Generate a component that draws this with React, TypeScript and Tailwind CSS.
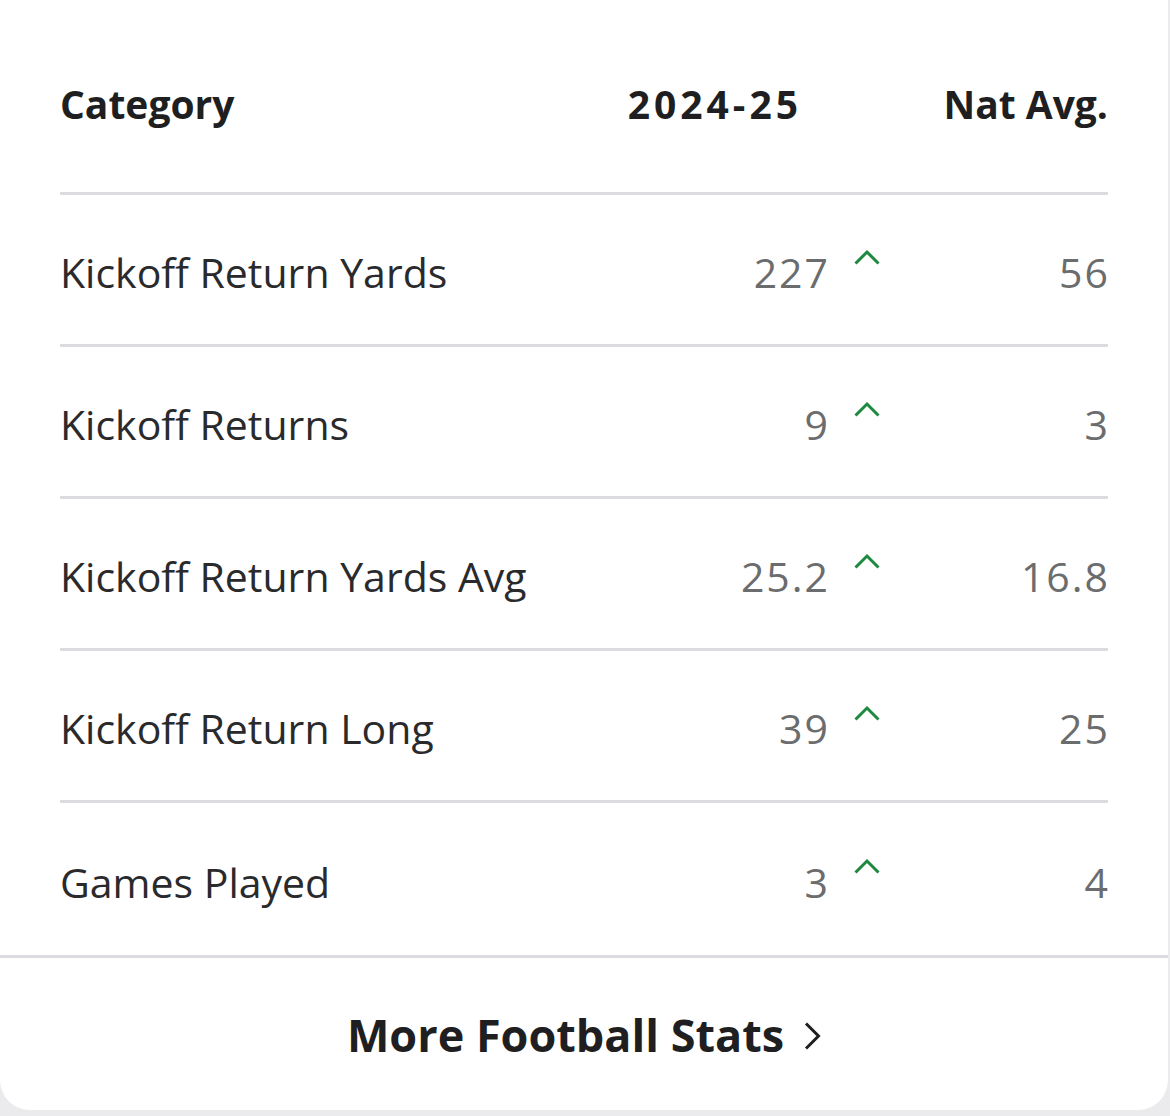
import React from "react";

const rows = [
  { label: "Kickoff Return Yards", value: "227", avg: "56" },
  { label: "Kickoff Returns", value: "9", avg: "3" },
  { label: "Kickoff Return Yards Avg", value: "25.2", avg: "16.8" },
  { label: "Kickoff Return Long", value: "39", avg: "25" },
  { label: "Games Played", value: "3", avg: "4" },
];

function Caret() {
  return (
    <svg width="26" height="16" viewBox="0 0 26 16" fill="none">
      <path d="M1.5 14.5 L13 3 L24.5 14.5" stroke="#1b8a3e" strokeWidth="3" />
    </svg>
  );
}

export default function App() {
  return (
    <div className="w-[1170px] h-[1116px] bg-[#ebebee]" style={{ fontFamily: '"Open Sans", "Noto Sans", sans-serif' }}>
      <div className="w-[1168px] h-[1110px] bg-white rounded-b-[30px] flex flex-col">
        <div className="pl-[60px] pr-[60px]">
          <div className="grid grid-cols-[1fr_230px_280px] h-[195px] items-center border-b-[3px] border-[#dcdce0] text-[#1f1f21] font-bold text-[39px] leading-none">
            <div className="mt-[14px]">Category</div>
            <div className="text-right pr-[30px] mt-[14px]">
              <span className="tracking-[4px] -mr-[4px]">2024-25</span>
            </div>
            <div className="text-right mt-[14px]">Nat Avg.</div>
          </div>
          {rows.map((r, i) => (
            <div
              key={r.label}
              className={`grid grid-cols-[1fr_230px_280px] h-[152px] items-center text-[41px] leading-none ${i < rows.length - 1 ? "border-b-[3px] border-[#dcdce0]" : ""}`}
            >
              <div className="text-[#2a2a2c] mt-[6px]">{r.label}</div>
              <div className="text-right text-[#6b6c6e] mt-[6px]">
                <span className="tracking-[2px] -mr-[2px]">{r.value}</span>
              </div>
              <div className="flex items-center justify-between mt-[6px]">
                <div className="pl-[26px] -mt-[32px]">
                  <Caret />
                </div>
                <div className="text-[#6b6c6e]">
                  <span className="tracking-[2px] -mr-[2px]">{r.avg}</span>
                </div>
              </div>
            </div>
          ))}
        </div>
        <div className="border-t-[3px] border-[#dcdce0] flex-1 flex items-center justify-center">
          <div className="flex items-center gap-[20px] text-[#1f1f21] font-bold text-[45px] leading-none">
            <span>More Football Stats</span>
            <svg width="17" height="28" viewBox="0 0 17 28" fill="none" className="mt-[4px]">
              <path d="M2 1.5 L14.5 14 L2 26.5" stroke="#1f1f21" strokeWidth="3" />
            </svg>
          </div>
        </div>
      </div>
    </div>
  );
}
